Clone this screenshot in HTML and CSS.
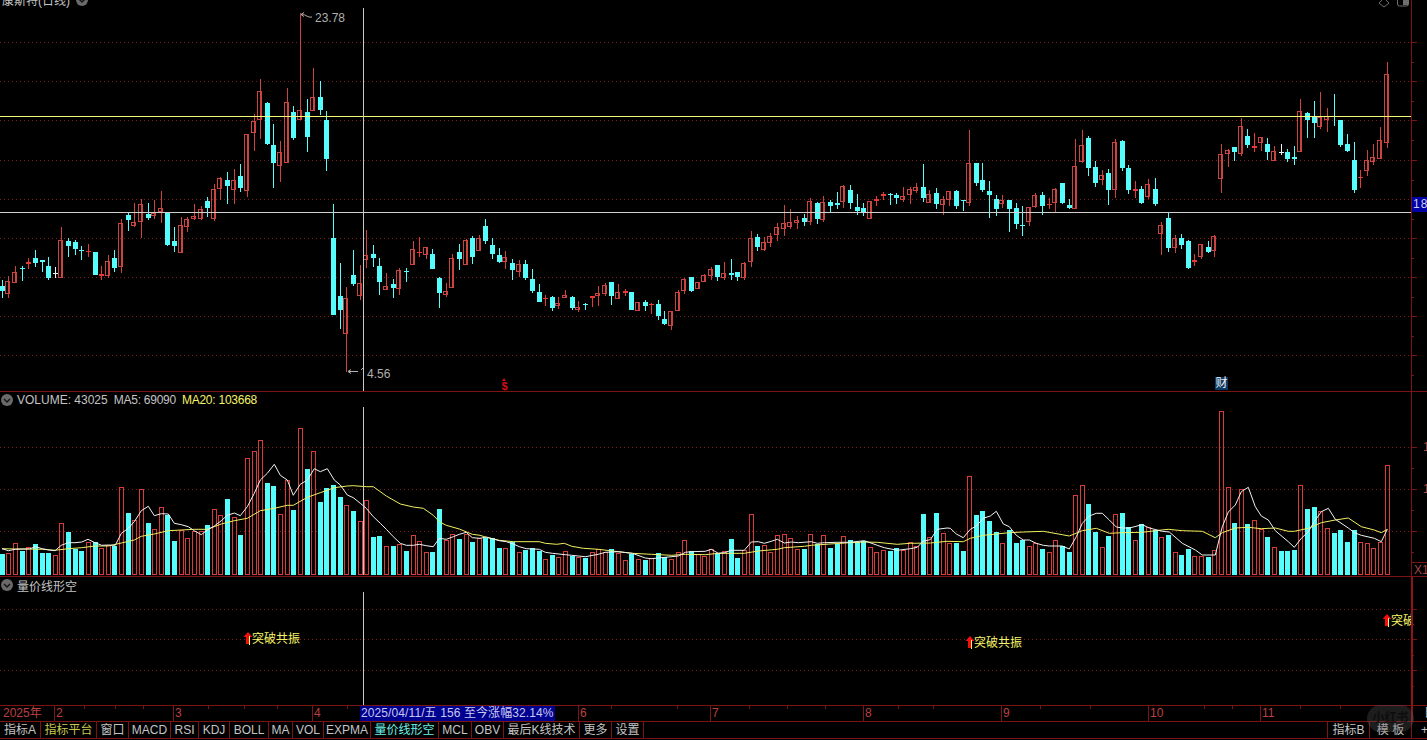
FILE: index.html
```html
<!DOCTYPE html>
<html lang="zh">
<head>
<meta charset="utf-8">
<title>康斯特(日线)</title>
<link rel="stylesheet" href="styles.css">
</head>
<body>
<div class="terminal">
  <section class="panel panel-price">
    <div class="plot">
      <svg id="price" class="chart" width="1411" height="391"></svg>
      <div class="head head-title">
        <span>康斯特(日线)</span>
        <svg class="chev" width="12" height="12" viewBox="0 0 12 12"><circle cx="6" cy="6" r="6"/><path d="M3 5l3 3 3-3"/></svg>
      </div>
      <svg class="win-icons" width="32" height="10" viewBox="0 0 32 10"><path d="M6 -2L11 3 6 7 1 3Z"/><rect x="19.500" y="-4" width="11" height="10" rx="2"/><rect class="win-fill" x="25" y="-3" width="5" height="8"/></svg>
      <span class="price-note note-high">23.78</span>
      <span class="price-note note-low">4.56</span>
      <span class="mark-s">$</span>
      <span class="mark-cai">财</span>
    </div>
    <div class="axis">
      <svg id="axis-price" width="16" height="391"></svg>
      <span class="price-tag">18</span>
    </div>
  </section>

  <section class="panel panel-volume">
    <div class="plot">
      <div class="head">
        <svg class="chev" width="12" height="12" viewBox="0 0 12 12"><circle cx="6" cy="6" r="6"/><path d="M3 5l3 3 3-3"/></svg>
        <span>VOLUME: 43025</span>
        <span class="tight">MA5: 69090</span>
        <span class="yellow tight">MA20: 103668</span>
      </div>
      <svg id="volume" class="chart" width="1411" height="184"></svg>
    </div>
    <div class="axis">
      <svg id="axis-volume" width="16" height="184"></svg>
      <span class="axis-num num-a">1</span>
      <span class="axis-num num-b">1</span>
      <span class="axis-x">X1</span>
    </div>
  </section>

  <section class="panel panel-signal">
    <div class="plot">
      <div class="head">
        <svg class="chev" width="12" height="12" viewBox="0 0 12 12"><circle cx="6" cy="6" r="6"/><path d="M3 5l3 3 3-3"/></svg>
        <span>量价线形空</span>
      </div>
      <svg id="signal" class="chart" width="1411" height="128"></svg>
      <div class="signal sig-a"><svg width="10" height="13" viewBox="0 0 10 13"><path class="sig-red" d="M5 0L9.500 5H7V12H3V5H.5Z"/><path class="sig-yel" d="M6.500 4V13"/></svg><span>突破共振</span></div>
      <div class="signal sig-b"><svg width="10" height="13" viewBox="0 0 10 13"><path class="sig-red" d="M5 0L9.500 5H7V12H3V5H.5Z"/><path class="sig-yel" d="M6.500 4V13"/></svg><span>突破共振</span></div>
      <div class="signal sig-c"><svg width="10" height="13" viewBox="0 0 10 13"><path class="sig-red" d="M5 0L9.500 5H7V12H3V5H.5Z"/><path class="sig-yel" d="M6.500 4V13"/></svg><span>突破共振</span></div>
    </div>
    <div class="axis axis-bright">
      <svg id="axis-signal" width="16" height="128"></svg>
    </div>
  </section>

  <div class="dates">
    <span class="date-year">2025年</span>
    <span>2</span>
    <span>3</span>
    <span>4</span>
    <span class="date-now">2025/04/11/五 156 至今涨幅32.14%</span>
    <span class="date-blank"></span>
    <span>6</span>
    <span>7</span>
    <span>8</span>
    <span>9</span>
    <span>10</span>
    <span>11</span>
    <span class="date-end">日</span>
    <svg id="date-ticks" class="date-ticks" width="1411" height="4"></svg>
  </div>

  <nav class="tabs">
    <span>指标A</span>
    <span class="tab-yellow">指标平台</span>
    <span>窗口</span>
    <span>MACD</span>
    <span>RSI</span>
    <span>KDJ</span>
    <span>BOLL</span>
    <span>MA</span>
    <span>VOL</span>
    <span>EXPMA</span>
    <span class="tab-cyan">量价线形空</span>
    <span>MCL</span>
    <span>OBV</span>
    <span>最后K线技术</span>
    <span>更多</span>
    <span>设置</span>
    <span class="tab-gap"></span>
    <span>指标B</span>
    <span>模 板</span>
    <span>+</span>
  </nav>

  <div class="watermark">小红书</div>
</div>
<script src="script.js"></script>
</body>
</html>
```

FILE: styles.css
```css
* { box-sizing: border-box; }
html, body { margin: 0; padding: 0; background: #000; }
body {
  width: 1427px;
  height: 740px;
  overflow: hidden;
  font-family: "Liberation Sans", "Noto Sans CJK SC", sans-serif;
  font-size: 12px;
  color: #c4c4c4;
}
.terminal { position: relative; width: 1427px; height: 740px; display: flex; flex-direction: column; }

.panel { display: flex; border-bottom: 1px solid #7c1414; }
.panel-price { height: 392px; }
.panel-volume { height: 185px; }
.panel-signal { height: 128px; border-bottom: 0; }

.plot { position: relative; flex: 1; min-width: 0; overflow: hidden; }
.chart { position: absolute; left: 0; top: 0; display: block; }
.axis { position: relative; width: 16px; overflow: hidden; border-left: 1px solid #7c1414; margin-left: 0; }
.axis svg { position: absolute; left: -1px; top: 0; }
.axis-bright { border-left: 2px solid #8e1616; }
.axis-bright svg { left: -2px; }

.head { position: relative; z-index: 2; display: flex; align-items: center; height: 14px; margin-top: 1px; padding-left: 1px; gap: 6px; white-space: nowrap; }
.head .chev { margin-right: -2px; }
.head-title { margin-top: -7px; height: 13px; padding-left: 2px; gap: 6px; }
.head-title .chev { margin-top: 1px; }
.tight { letter-spacing: -0.25px; }
.chev circle { fill: #6a6a6a; }
.chev path { fill: none; stroke: #161616; stroke-width: 1.500; }
.yellow { color: #f4f46a; }

.win-icons { position: absolute; right: 1px; top: 0; }
.win-icons path, .win-icons rect { fill: none; stroke: #6e6e6e; }
.win-icons .win-fill { fill: #6e6e6e; stroke: none; }

.price-note { position: absolute; color: #b0b0b0; line-height: 14px; }
.note-high { left: 315px; top: 11px; }
.note-low { left: 367px; top: 367px; }
.mark-s { position: absolute; left: 500px; top: 378px; width: 9px; height: 13px; color: #d01010; font-weight: 700; font-size: 11px; line-height: 16px; text-align: center; }
.mark-s::before { content: ""; position: absolute; left: 2px; top: 0; border-left: 2.5px solid transparent; border-right: 2.5px solid transparent; border-bottom: 3px solid #d01010; }
.mark-cai { position: absolute; left: 1215px; top: 377px; width: 13px; height: 13px; background: #0b3a66; color: #f0f0f0; line-height: 13px; text-align: center; }

.price-tag { position: absolute; left: 0; top: 197px; width: 16px; height: 15px; background: #0000a4; color: #d0d0e8; line-height: 15px; padding-left: 1px; letter-spacing: 1px; white-space: nowrap; }
.axis-num { position: absolute; left: 11px; color: #b04a4a; line-height: 14px; }
.num-a { top: 48px; }
.num-b { top: 90px; }
.axis-x { position: absolute; left: 0; top: 170px; width: 16px; height: 14px; border-top: 1px solid #7c1414; color: #a04848; line-height: 14px; padding-left: 2px; white-space: nowrap; }

.signal { position: absolute; display: flex; align-items: center; gap: 0; color: #f6f66a; white-space: nowrap; line-height: 14px; }
.signal svg { margin-right: -1px; }
.signal span { position: relative; top: 1px; }
.sig-a { left: 243px; top: 54px; }
.sig-b { left: 965px; top: 58px; }
.sig-c { left: 1382px; top: 36px; }
.sig-red { fill: #f01010; }
.sig-yel { fill: none; stroke: #f6f66a; }

.dates {
  position: relative;
  display: grid;
  grid-template-columns: 54px 119px 139px 48px 195px 23px 132px 153px 138px 147px 112px 151px 16px;
  height: 17px;
  border-top: 1px solid #7c1414;
  border-bottom: 1px solid #7c1414;
  color: #bc4040;
  line-height: 15px;
}
.dates span { border-left: 1px solid #7c1414; padding-left: 1px; white-space: nowrap; overflow: hidden; }
.dates .date-year { border-left: 0; padding-left: 3px; }
.dates .date-now { background: #00008e; color: #c8c8ee; border-left: 0; padding-left: 1px; letter-spacing: 0.1px; }
.dates .date-blank { border-left: 0; }
.dates .date-end { border-left: 2px solid #8e1616; color: #c4c4c4; padding-left: 11px; }
.date-ticks { position: absolute; left: 0; top: 0; }

.tabs {
  display: grid;
  grid-template-columns: 41px 56px 32px 42px 28px 31px 39px 24px 31px 47px 68px 33px 32px 76px 32px 32px 684px 42px 42px 16px;
  height: 17px;
  border-bottom: 1px solid #7c1414;
  line-height: 16px;
}
.tabs span { border-right: 1px solid #7c1414; text-align: center; white-space: nowrap; overflow: hidden; color: #c4c4c4; }
.tabs .tab-yellow { color: #c8c850; }
.tabs .tab-cyan { color: #6cf4e8; }
.tabs span:last-child { border-right: 0; text-align: right; padding-right: 0; }

.watermark {
  position: absolute;
  left: 1367px;
  top: 705px;
  width: 47px;
  height: 27px;
  border-radius: 14px;
  background: rgba(90, 90, 90, 0.32);
  color: rgba(0, 0, 0, 0.55);
  font-weight: 700;
  text-align: center;
  line-height: 27px;
}

.grid { stroke: #7c1c1c; stroke-width: 1; stroke-dasharray: 1 3; }
.tick { stroke: #7c1414; stroke-width: 1; }
.red-box { fill: none; stroke: #cc4440; stroke-width: 1; }
.vol-box { fill: none; stroke: #d83c38; stroke-width: 1; }
.red-fill { fill: #cc4440; }
.red-solid { fill: #e83a34; }
.cyan-fill { fill: #55fdfd; }
.white-fill { fill: #f2f2f2; }
.cross { stroke: #c8c8c8; stroke-width: 1; }
.hl-yellow { stroke: #f8f878; stroke-width: 1; }
.hl-white { stroke: #d0d0d0; stroke-width: 1; }
.ma5 { fill: none; stroke: #f2f2f2; stroke-width: 1; }
.ma20 { fill: none; stroke: #f0f060; stroke-width: 1; }
.note-line { fill: none; stroke: #b4b4b4; stroke-width: 1; }
```

FILE: script.js
```js
var CANDLES = [
['c',280,286,291,298],['r',276,281,294,298],['r',266,272,283,283],['c',266,268,269,281],['s',258,262,264,269],
['c',250,258,263,267],['c',260,260,262,272],['c',257,266,278,280],['w',267,273,274,278],['r',227,240,278,278],
['c',238,241,246,257],['c',240,242,249,255],['c',246,250,251,260],['s',244,251,252,257],['c',252,252,275,275],
['s',266,274,276,280],['r',255,261,276,278],['c',250,258,268,272],['r',219,223,267,273],['c',213,215,220,231],
['r',203,222,226,227],['r',199,204,222,238],['c',203,214,218,220],['r',200,213,216,219],['r',191,208,212,223],
['c',212,213,245,246],['c',227,241,246,252],['r',217,225,253,253],['r',217,219,227,232],['r',204,216,219,220],
['r',206,209,219,220],['c',197,201,208,217],['r',184,189,219,221],['r',177,178,189,200],['c',172,180,186,204],
['r',169,180,190,204],['c',164,176,188,192],['r',134,134,191,197],['r',114,121,133,151],['r',79,91,120,139],
['c',102,103,144,145],['c',124,145,163,188],['r',141,152,166,182],['r',88,102,163,163],['c',106,112,138,140],
['r',13,110,120,120],['c',99,112,137,152],['r',68,97,111,111],['c',81,97,110,115],['c',111,120,159,171],
['c',204,238,315,315],['c',263,296,310,329],['r',287,298,334,372],['c',250,275,284,286],['r',265,283,296,300],
['r',230,255,260,268],['c',245,254,258,267],['c',258,266,282,295],['r',273,286,290,290],['c',279,284,288,298],
['r',268,270,289,295],['c',268,271,272,282],['r',241,249,265,265],['s',237,252,253,257],['r',247,247,255,259],
['c',249,254,269,269],['c',277,278,293,308],['r',283,291,295,297],['r',254,258,288,288],['c',244,252,259,270],
['r',239,240,265,265],['c',236,238,257,264],['r',235,238,251,251],['c',219,226,241,244],['c',238,245,254,259],
['c',248,255,262,263],['r',251,257,262,269],['c',259,263,270,280],['r',260,264,272,277],['c',260,264,278,280],
['c',269,279,291,293],['c',284,292,302,302],['s',295,298,299,306],['c',296,297,308,311],['r',297,303,306,309],
['r',290,295,298,298],['c',296,297,308,310],['r',301,307,310,312],['c',303,304,305,310],['s',296,296,298,307],
['r',286,293,296,306],['r',283,285,294,296],['c',282,282,296,305],['r',284,292,299,299],['s',289,291,293,296],
['c',292,292,310,310],['r',302,302,311,311],['c',300,302,306,311],['s',303,304,305,314],['c',300,304,316,320],
['c',311,319,324,325],['r',311,311,326,330],['r',290,292,311,311],['r',278,279,291,294],['c',277,277,291,292],
['r',282,282,289,289],['r',274,275,282,282],['r',267,269,276,280],['c',265,265,277,281],['r',262,273,278,280],
['c',259,273,275,280],['c',272,272,277,281],['r',262,263,278,280],['r',231,238,262,267],['c',234,237,247,251],
['r',237,242,250,251],['r',233,236,243,247],['r',223,227,235,241],['r',205,223,229,236],['r',209,222,227,229],
['r',216,220,223,229],['c',214,218,222,226],['r',198,201,222,225],['c',202,203,219,224],['r',196,202,220,222],
['c',200,202,206,213],['c',192,203,205,209],['r',185,186,202,208],['c',185,190,203,209],['c',194,207,211,215],
['c',203,208,212,216],['r',201,201,219,219],['s',196,199,201,206],['s',192,194,196,200],['c',193,194,195,205],
['c',193,195,198,204],['r',187,196,200,202],['r',187,189,195,204],['r',183,187,191,193],['c',164,187,198,202],
['r',190,194,203,203],['c',188,193,204,209],['r',196,199,205,215],['r',191,191,200,206],['c',190,191,206,209],
['c',200,200,201,211],['r',130,163,203,206],['c',163,163,183,186],['c',163,180,190,192],['c',181,191,195,218],
['c',195,199,209,216],['r',195,200,204,208],['c',200,200,209,232],['c',203,208,224,229],['c',206,225,226,236],
['r',207,207,222,226],['r',193,195,207,208],['c',192,195,206,215],['s',198,204,205,209],['r',188,189,203,212],
['c',183,183,203,204],['c',199,205,208,209],['r',139,166,209,209],['r',130,145,162,163],['c',136,138,168,176],
['c',161,167,183,187],['r',170,175,180,185],['c',169,173,190,205],['r',139,142,190,198],['c',140,141,168,171],
['c',165,168,190,194],['s',181,189,191,198],['c',186,189,203,204],['r',179,184,197,199],['c',178,189,204,206],
['r',222,225,234,255],['c',212,218,248,252],['r',235,238,248,253],['c',234,238,245,249],['c',240,241,268,269],
['s',254,260,262,266],['r',244,244,257,259],['c',241,247,252,253],['r',235,236,251,257],['r',144,154,179,193],
['r',149,150,154,167],['c',147,147,152,161],['r',118,126,154,156],['c',129,136,145,148],['s',133,146,148,152],
['r',137,137,143,151],['c',138,144,152,160],['r',146,151,161,161],['x',144,152,153,155],['c',149,152,159,162],
['c',146,157,159,165],['r',99,111,152,152],['c',112,113,120,138],['c',101,117,123,138],['r',92,117,127,129],
['r',108,116,120,132],['c',94,116,117,126],['c',120,120,145,147],['c',134,144,151,152],['c',142,160,190,193],
['s',170,177,178,188],['r',150,160,171,176],['r',144,157,162,165],['r',127,140,159,159],['r',62,74,143,148]
];

var VOLUME = [
554,553,543,551,547,544,553,553,555,523,532,549,551,542,542,548,545,546,487,513,
520,489,523,529,507,515,541,530,538,531,531,525,509,515,499,517,535,458,451,440,
483,486,514,480,510,428,469,451,502,488,485,497,505,511,521,500,537,536,546,546,
544,551,535,541,552,552,509,540,534,539,534,542,538,538,538,548,548,542,552,550,
548,551,559,555,557,551,556,557,558,552,549,552,549,553,560,554,559,560,558,553,
557,559,552,540,551,554,556,549,553,551,539,558,550,514,546,545,552,535,534,538,
549,549,534,544,535,548,544,536,540,542,541,547,552,550,551,548,550,542,546,514,
537,513,533,543,543,551,476,515,511,521,532,543,530,543,540,546,543,549,552,540,
546,552,495,485,504,532,547,536,514,513,527,540,524,527,530,537,535,552,555,549,
556,556,557,550,411,487,523,489,524,520,529,537,547,551,551,550,485,509,507,511,
528,533,530,542,530,542,543,548,542,465
];

function seg(xo, yo, pts) {
  return pts.map(function (p) { return [xo + p[0] / 3, yo + p[1] / 3]; });
}
function join(a, b, c) {
  return a.concat(
    b.filter(function (p) { return p[0] > 480 && p[0] < 947; }),
    c
  );
}
var MA5 = join(
  seg(0, 390, [[6,476],[25,482],[46,478],[67,477],[88,477],[106,470],[127,476],[148,480],[165,482],[184,466],[205,458],[225,458],[245,456],[264,448],[285,458],[305,466],[325,465],[346,466],[364,430],[385,415],[403,395],[424,362],[445,349],[463,377],[484,371],[505,372],[523,400],[544,404],[565,410],[583,422],[604,434],[622,420],[643,408],[664,392],[682,376],[703,369],[721,377],[742,350],[763,310],[781,270],[802,250],[823,223],[841,256],[862,270],[880,316],[901,283],[922,270],[943,236],[961,245],[982,236],[1003,270],[1021,285],[1042,315],[1060,323],[1081,340],[1099,355],[1120,380],[1141,400],[1159,418],[1180,440],[1201,460],[1219,466],[1240,466],[1258,463],[1279,467],[1300,470],[1318,445],[1339,448],[1360,440],[1378,433],[1399,427],[1417,443],[1440,445]]),
  seg(470, 470, [[0,197],[10,204],[49,201],[88,212],[109,215],[130,222],[148,230],[169,236],[208,238],[226,247],[247,250],[286,254],[305,256],[325,258],[346,260],[385,253],[406,247],[445,245],[487,250],[526,264],[544,266],[586,262],[625,258],[646,247],[664,245],[706,244],[724,238],[745,250],[763,248],[784,241],[823,241],[844,216],[865,215],[883,220],[904,214],[922,208],[943,219],[964,216],[985,218],[1024,215],[1042,220],[1063,218],[1102,217],[1141,217],[1183,212],[1222,226],[1243,233],[1282,241],[1321,236],[1342,232],[1360,213],[1381,209],[1402,178],[1438,176]]),
  seg(947, 390, [[0,414],[10,415],[28,432],[49,443],[70,418],[88,408],[109,385],[130,378],[148,364],[169,402],[187,410],[208,436],[229,450],[247,450],[268,460],[289,466],[307,468],[346,468],[367,477],[388,440],[406,400],[427,378],[448,370],[466,370],[487,390],[508,411],[526,414],[547,414],[586,404],[607,414],[646,424],[667,426],[706,460],[745,480],[766,495],[805,495],[826,410],[844,366],[865,345],[883,305],[904,292],[925,350],[943,378],[964,390],[985,422],[1024,455],[1042,472],[1063,445],[1084,425],[1102,395],[1123,365],[1144,355],[1165,388],[1204,414],[1222,428],[1243,436],[1282,445],[1303,455],[1321,418]])
);
var MA20 = join(
  seg(0, 390, [[6,476],[46,477],[88,477],[127,478],[165,481],[205,476],[245,473],[285,468],[325,468],[364,459],[403,450],[424,439],[463,432],[505,422],[544,420],[583,418],[622,418],[664,402],[703,392],[742,385],[781,362],[823,355],[862,346],[880,346],[922,322],[961,308],[1003,293],[1042,288],[1060,287],[1099,290],[1120,290],[1159,318],[1201,342],[1240,351],[1270,355],[1300,376],[1318,395],[1339,406],[1378,417],[1417,433],[1440,436]]),
  seg(470, 470, [[0,192],[25,197],[49,202],[88,211],[130,215],[208,215],[226,220],[260,223],[283,220],[305,229],[340,235],[385,238],[445,245],[487,250],[544,253],[605,256],[646,253],[706,254],[745,250],[823,250],[865,243],[922,238],[943,233],[1003,229],[1024,226],[1080,222],[1141,218],[1183,216],[1222,217],[1282,223],[1321,220],[1381,219],[1438,214]]),
  seg(947, 390, [[0,454],[49,455],[70,445],[109,436],[148,432],[187,428],[229,426],[289,424],[346,434],[367,438],[406,422],[448,415],[487,430],[526,428],[586,427],[625,422],[664,418],[706,422],[766,424],[805,443],[826,428],[865,414],[904,412],[943,416],[985,414],[1024,424],[1042,424],[1084,415],[1123,398],[1165,390],[1204,384],[1243,410],[1282,420],[1303,428],[1321,418]])
);

function center(i) { return Math.floor(2.3 + i * 6.626); }
function rect(cls, x, y, w, h) {
  return '<rect class="' + cls + '" x="' + x + '" y="' + y + '" width="' + w + '" height="' + h + '" shape-rendering="crispEdges"/>';
}
function line(cls, x1, y1, x2, y2) {
  return '<line class="' + cls + '" x1="' + x1 + '" y1="' + y1 + '" x2="' + x2 + '" y2="' + y2 + '" shape-rendering="crispEdges"/>';
}
function gridLines(ys) {
  return ys.map(function (y) { return line('grid', 0, y + 0.5, 1411, y + 0.5); }).join('');
}
function axisTicks(ys, mids) {
  return ys.map(function (y) { return line('tick', 0, y + 0.5, 6, y + 0.5); }).join('') +
    mids.map(function (y) { return line('tick', 0, y + 0.5, 3, y + 0.5); }).join('');
}
function polyline(cls, pts, yo) {
  return '<polyline class="' + cls + '" points="' + pts.map(function (p) {
    return p[0].toFixed(1) + ',' + (p[1] - yo).toFixed(1);
  }).join(' ') + '"/>';
}

var price = gridLines([42, 81, 120, 160, 199, 238, 277, 316, 355]);
CANDLES.forEach(function (k, i) {
  var c = center(i), t = k[0], wt = k[1], bt = k[2], bb = k[3], wb = k[4];
  var fill = t === 'c' ? 'cyan-fill' : t === 'w' || t === 'x' ? 'white-fill' : t === 's' ? 'red-solid' : 'red-fill';
  if (wb > wt) price += rect(fill, c, wt, 1, wb - wt);
  if (t === 'r') {
    price += '<rect class="red-box" x="' + (c - 1.5) + '" y="' + (bt + 0.5) + '" width="4" height="' + Math.max(bb - bt - 1, 1) + '" transform="translate(-1 0)" shape-rendering="crispEdges"/>';
  } else {
    price += rect(fill, c - 2, bt, 5, Math.max(bb - bt, 1));
  }
});
price += line('hl-yellow', 0, 116.5, 1411, 116.5);
price += line('hl-white', 0, 212.5, 1411, 212.5);
price += line('cross', 363.5, 8, 363.5, 391);
price += '<path class="note-line" d="M304 12.500L301 14.500 304 16.500M301.500 14.500C304 13 307 18 312 17"/>';
price += '<path class="note-line" d="M351 369.500L348 371.500 351 373.500M348.500 371.500H358M361 370L363 368"/>';
document.getElementById('price').innerHTML = price;

var VOL_TOP = 392;
var vol = gridLines([447 - VOL_TOP, 489 - VOL_TOP, 531 - VOL_TOP]);
VOLUME.forEach(function (y, i) {
  var c = center(i), t = CANDLES[i][0], top = y - VOL_TOP, base = 575 - VOL_TOP;
  if (t === 'c' || t === 'x') {
    vol += rect('cyan-fill', c - 2, top, 5, base - top);
  } else {
    vol += '<rect class="vol-box" x="' + (c - 1.5) + '" y="' + (top + 0.5) + '" width="4" height="' + (base - top - 1) + '" transform="translate(-0.5 0)" shape-rendering="crispEdges"/>';
  }
});
vol += polyline('ma20', MA20, VOL_TOP);
vol += polyline('ma5', MA5, VOL_TOP);
vol += line('cross', 363.5, 407 - VOL_TOP, 363.5, 575 - VOL_TOP);
document.getElementById('volume').innerHTML = vol;

var SIG_TOP = 577;
var sig = gridLines([609 - SIG_TOP, 639 - SIG_TOP, 670 - SIG_TOP]);
sig += line('cross', 363.5, 592 - SIG_TOP, 363.5, 128);
document.getElementById('signal').innerHTML = sig;

document.getElementById('axis-price').innerHTML = axisTicks(
  [42, 81, 120, 160, 199, 238, 277, 316, 355],
  [62, 101, 140, 180, 219, 258, 297, 336, 375]
);
document.getElementById('axis-volume').innerHTML = axisTicks(
  [447 - VOL_TOP, 489 - VOL_TOP, 531 - VOL_TOP],
  [468 - VOL_TOP, 510 - VOL_TOP, 552 - VOL_TOP]
);
document.getElementById('axis-signal').innerHTML = axisTicks(
  [609 - SIG_TOP, 639 - SIG_TOP, 670 - SIG_TOP],
  [624 - SIG_TOP, 655 - SIG_TOP, 686 - SIG_TOP]
);
document.getElementById('date-ticks').innerHTML = [84, 115, 143, 208, 244, 277, 347, 611, 677, 749, 787, 825, 898, 933, 1040, 1090, 1204, 1232, 1300, 1340]
  .map(function (x) { return line('tick', x + 0.5, 0, x + 0.5, 3); }).join('');
```
